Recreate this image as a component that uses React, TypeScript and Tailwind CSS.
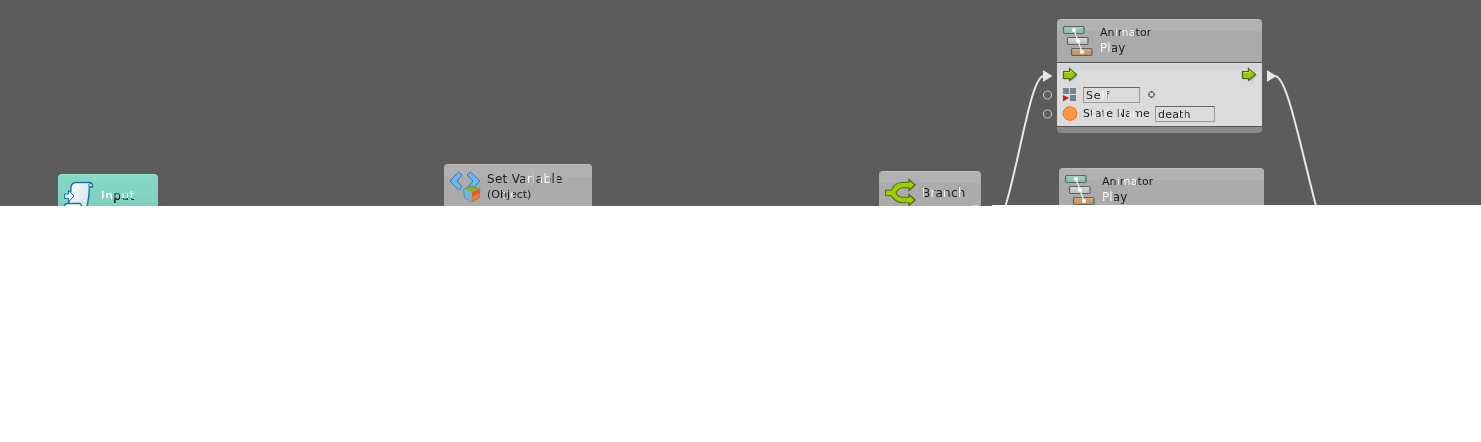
import React from "react";

type BoxProps = { className: string; children?: React.ReactNode };

function Caption({ className, children }: BoxProps) {
  return (
    <div className={`whitespace-pre bg-clip-text text-transparent ${className}`}>{children}</div>
  );
}

function StateIcon() {
  return (
    <svg width="32" height="32" viewBox="0 0 32 32" className="shrink-0">
      <defs>
        <linearGradient id="teal" x2="0" y2="1"><stop stopColor="#a5cfc3" /><stop offset="1" stopColor="#7fbdaa" /></linearGradient>
        <linearGradient id="grey" x2="0" y2="1"><stop stopColor="#dadada" /><stop offset="1" stopColor="#b9b9b9" /></linearGradient>
        <linearGradient id="tan" x2="0" y2="1"><stop stopColor="#d8ac82" /><stop offset="1" stopColor="#bd8a5c" /></linearGradient>
      </defs>
      <g stroke="#5f6363" strokeWidth="1.2">
        <rect x="1.5" y="1.5" width="20.500" height="7" rx="1.2" fill="url(#teal)" />
        <rect x="5.5" y="12.5" width="20.500" height="7" rx="1.2" fill="url(#grey)" />
        <rect x="9.5" y="23.5" width="20.500" height="7" rx="1.2" fill="url(#tan)" />
      </g>
      <path d="M12 5 16 16 20 27" stroke="#ececec" strokeWidth="1.3" fill="none" />
      <g fill="#fff"><circle cx="12" cy="5" r="2.1" /><circle cx="16" cy="16" r="2.1" /><circle cx="20" cy="27" r="2.1" /></g>
    </svg>
  );
}

function FlowArrow() {
  return (
    <svg width="16" height="16" viewBox="0 0 16 16">
      <path d="M2 5.500H9V2.500L16 8.500 9 15V12.500H2Z" fill="#777" opacity=".4" />
      <path d="M1.500 4.500H7.500V1.500L14.500 7.500 7.500 13.500V11.500H1.500Z" fill="#95cb00" stroke="#4d6420" strokeWidth="1.2" />
      <path d="M2.500 5.500H8.500V3.500L12 6.500" fill="none" stroke="#b9e03c" />
    </svg>
  );
}

function AnimatorHeader() {
  return (
    <div className="flex h-[43px] rounded-t-[4px] border-t border-[#bdbdbd] bg-linear-to-b from-[#b1b1b1] from-25% to-[#ababab] to-26% pl-[5px] pt-[5px]">
      <StateIcon />
      <div className="ml-[6px] text-[11px] leading-[15px]">
        <Caption className="tracking-[0.1px] bg-[linear-gradient(90deg,#1c1c1c_0_30%,#fff_31%_34%,#1c1c1c_35%_42%,#fff_43%_66%,#1c1c1c_68%)]">Animator</Caption>
        <Caption className="w-[27px] text-[12px] leading-[17px] tracking-[0.1px] bg-[linear-gradient(90deg,#fff_0_43%,#1c1c1c_45%)]">Play</Caption>
      </div>
    </div>
  );
}

export default function App() {
  return (
    <main className="h-[442px] w-full overflow-hidden bg-white font-['DejaVu_Sans',sans-serif]">
      <div className="relative h-[206px] w-full overflow-hidden bg-[#5c5c5c]">
        <section className="absolute left-[58px] top-[174px] flex h-[44px] w-[100px] rounded-[4px] border-t border-[#9ae3d1] bg-linear-to-b from-[#88d9c7] to-[#78cdb8] pl-[5px] pt-[5px]">
          <svg width="32" height="32" viewBox="0 0 32 32">
            <defs><linearGradient id="paper" x2="1" y2="1"><stop stopColor="#fff" /><stop offset="1" stopColor="#c7dce9" /></linearGradient></defs>
            <path d="M8 7Q9 2.500 13 2.500H27Q30 3 29.500 7H26.500Q26 20 23 31H3Q8 18 8 7Z" fill="url(#paper)" stroke="#1d70a5" strokeWidth="1.4" />
            <path d="M26 7Q25 3 28 3" fill="none" stroke="#1d70a5" />
            <path d="M1.500 14H5.500V10.500L11 16 5.500 22V18.500H1.500Z" fill="#e9f5fb" stroke="#1d70a5" />
            <path d="M1 28Q1 23.500 5 23.500H17Q19 24 19 31H1Z" fill="#f6fafc" stroke="#1d70a5" strokeWidth="1.4" />
          </svg>
          <Caption className="ml-[6px] mt-[7px] h-[18px] text-[12px] leading-[18px] tracking-[0.6px] bg-[linear-gradient(90deg,#fff_0_37%,#222_39%_58%,transparent_59%),linear-gradient(180deg,#fff_0_62%,#222_64%)]">Input</Caption>
        </section>

        <section className="absolute left-[444px] top-[164px] flex h-[60px] w-[148px] rounded-[4px] border-t border-[#bdbdbd] bg-linear-to-b from-[#b1b1b1] from-20% to-[#ababab] to-21% pl-[5px] pt-[5px]">
          <svg width="32" height="34" viewBox="0 0 32 34">
            <g fill="#6db9ee" stroke="#2878b4" strokeLinejoin="round">
              <path d="M9.500 2 1 11 9.500 20 13 17 8 11 13 5Z" />
              <path d="M21.500 2 31 11 22.500 20 19 17 24 11 18 5Z" />
            </g>
            <path d="M14.500 19 22.500 16 31 19 23 22Z" fill="#8aae28" />
            <path d="M14.500 19 23 22V32L15.500 28Z" fill="#6cb6df" />
            <path d="M23 22 31 19 30 28 23 32Z" fill="#e65a28" />
            <path d="M23 27 30.500 23 30 28 23 32Z" fill="#ef7b38" />
            <path d="M14.500 19 22.500 16 31 19 30 28 23 32 15.500 28Z" fill="none" stroke="#63665a" strokeWidth=".5" />
          </svg>
          <div className="ml-[6px] mt-px text-[12px] leading-[16px]">
            <Caption className="tracking-[0.3px] bg-[linear-gradient(90deg,#1c1c1c_0_26%,#fff_27%_30%,#1c1c1c_31%_50%,#fff_51%_62%,#1c1c1c_63%_70%,#fff_71%_82%,#1c1c1c_83%_88%,#fff_89%_91%,#1c1c1c_92%)]">Set Variable</Caption>
            <Caption className="w-[46px] text-[11px] bg-[linear-gradient(90deg,#1c1c1c_0_34%,#fff_35%_38%,#1c1c1c_39%_50%,#fff_51%_56%,#1c1c1c_57%)]">(Object)</Caption>
          </div>
        </section>

        <section className="absolute left-[879px] top-[171px] flex h-[55px] w-[102px] rounded-[4px] border-t border-[#bdbdbd] bg-linear-to-b from-[#b1b1b1] from-20% to-[#ababab] to-21% pl-[5px] pt-[5px]">
          <svg width="32" height="32" viewBox="0 0 32 32" fill="none">
            <path d="M1 16H9Q12 8 19 8H26M9 16Q12 23 19 23H26" stroke="#506b1c" strokeWidth="6.4" />
            <path d="M25 2.500 31 8 25 13.500ZM25 17.500 31 23 25 28.500Z" fill="#9bd000" stroke="#506b1c" strokeWidth="1.3" />
            <path d="M2 16H9Q12 8 19 8H28M9 16Q12 23 19 23H28" stroke="#9bd000" strokeWidth="4.4" />
          </svg>
          <Caption className="ml-[6px] mt-[8px] h-[16px] text-[12px] leading-[16px] tracking-[0.2px] bg-[linear-gradient(90deg,#fff_0_5%,#1c1c1c_6%_19%,#fff_20%_26%,#1c1c1c_27%_48%,#fff_49%_53%,#1c1c1c_54%_84%,#fff_85%_88%,#1c1c1c_89%)]">Branch</Caption>
        </section>

        <section className="absolute left-[1057px] top-[19px] w-[205px] text-[11px]">
          <AnimatorHeader />
          <div className="h-[65px] border-y border-[#555] bg-linear-to-b from-[#d6d6d6] from-12% to-[#dbdbdb] to-13% px-[5px] pt-[4px]">
            <div className="flex h-[18px] justify-between"><FlowArrow /><FlowArrow /></div>
            <div className="flex h-[20px] items-center">
              <svg width="16" height="16" viewBox="0 0 16 16"><path d="M1 1H7V7H1ZM8 1H14V7H8ZM8 8H14V14H8Z" fill="#718391" /><path d="M1 8 7 11 1 14.500Z" fill="#d41b10" /></svg>
              <div className="ml-[5px] h-[16px] w-[57px] border border-[#999] border-t-[#666] pl-[2px] leading-[15px]"><Caption className="w-[27px] tracking-[0.8px] bg-[linear-gradient(90deg,#1c1c1c_0_60%,#fff_61%_78%,#1c1c1c_80%)]">Self</Caption></div>
              <svg className="ml-[7px] -mt-[2px]" width="9" height="9" viewBox="0 0 9 9" fill="none" stroke="#444"><circle cx="4.500" cy="4.500" r="2.800" /><path d="M4.500 1V2.500M4.500 6.500V8M1 4.500H2.500M6.500 4.500H8" /></svg>
            </div>
            <div className="flex h-[18px] items-center">
              <svg width="16" height="16" viewBox="0 0 16 16"><circle cx="8" cy="7.500" r="6.800" fill="#ff9944" stroke="#e66c10" /></svg>
              <Caption className="ml-[5px] w-[72px] tracking-[0.2px] bg-[linear-gradient(90deg,#1c1c1c_0_12%,#fff_13%_18%,#1c1c1c_19%_28%,#fff_29%_32%,#1c1c1c_33%_49%,#fff_50%_52%,#1c1c1c_53%_64%,#fff_65%_72%,#1c1c1c_73%)]">State Name</Caption>
              <div className="h-[16px] w-[60px] border border-[#999] border-t-[#666] pl-[2px] leading-[15px]"><Caption className="w-[33px] tracking-[0.2px] bg-[linear-gradient(90deg,#1c1c1c_0_62%,#fff_63%_66%,#1c1c1c_67%_76%,#fff_77%_80%,#1c1c1c_81%)]">death</Caption></div>
            </div>
          </div>
          <div className="h-[6px] rounded-b-[4px] bg-[#8a8a8a]" />
        </section>

        <section className="absolute left-[1059px] top-[168px] h-[80px] w-[205px]"><AnimatorHeader /></section>

        <svg className="absolute left-[985px] top-[60px]" width="340" height="146" viewBox="985 60 340 146" fill="none">
          <g stroke="#e8e8e8" strokeWidth="2"><path d="M1005.500 206C1021 154 1031 76 1044 76" /><path d="M1275 76C1287 76 1300 145 1316 206" /></g>
          <path d="M1043 70 1052.500 76 1043 82ZM1267 70 1276.500 76 1267 82Z" fill="#e5e5e5" />
          <circle cx="1047.500" cy="95" r="4" stroke="#bdbdbd" strokeWidth="1.2" /><circle cx="1047.500" cy="114" r="4" stroke="#bdbdbd" strokeWidth="1.2" />
        </svg>
        <div className="absolute left-[973px] top-[205px] h-px w-[5px] bg-[#d6d6d6]" />
        <div className="absolute left-[992px] right-0 top-[205px] h-px bg-white" />
      </div>
    </main>
  );
}
